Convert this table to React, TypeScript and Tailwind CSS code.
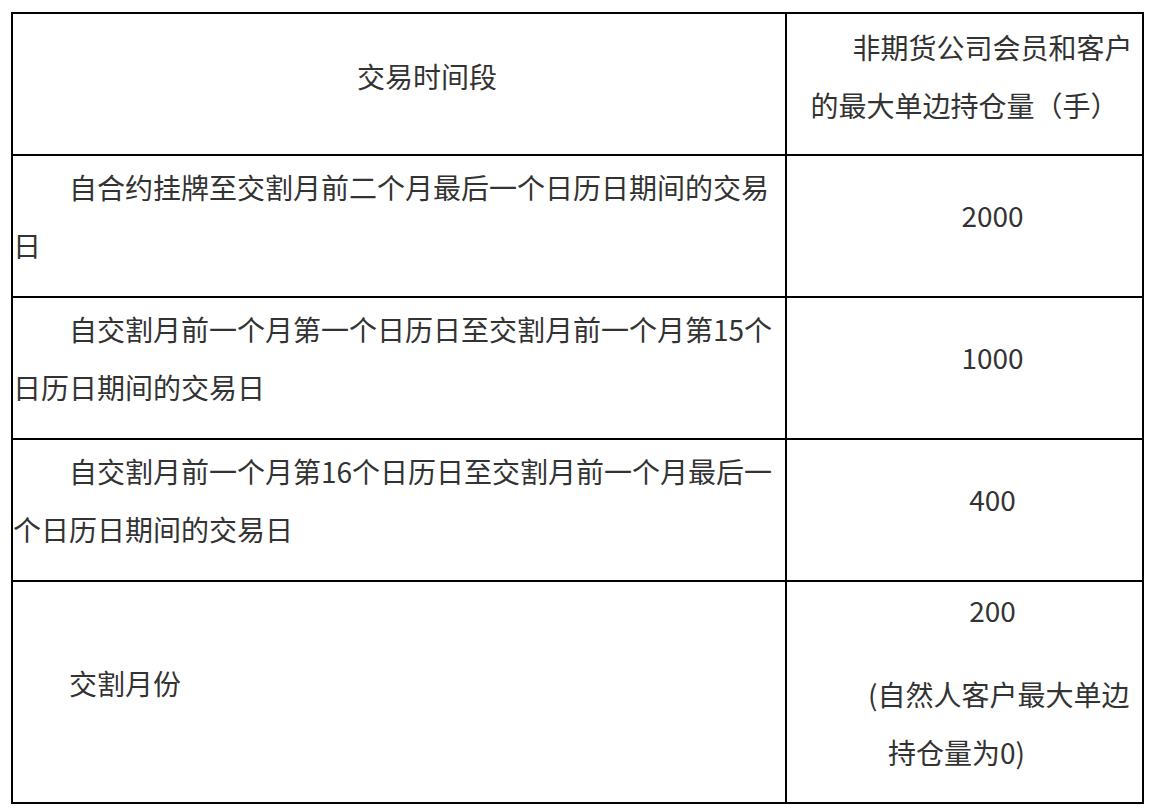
import React from "react"

type Row = {
  period: string
  limit: string
}

const rows: Row[] = [
  { period: "自合约挂牌至交割月前二个月最后一个日历日期间的交易日", limit: "2000" },
  { period: "自交割月前一个月第一个日历日至交割月前一个月第15个日历日期间的交易日", limit: "1000" },
  { period: "自交割月前一个月第16个日历日至交割月前一个月最后一个日历日期间的交易日", limit: "400" },
]

const font = { fontFamily: '"Noto Sans CJK SC", "Noto Sans", sans-serif' }

export default function App() {
  return (
    <div className="min-h-screen bg-white pt-[12px] pl-[11px]" style={font}>
      <div className="w-[1133px] border-2 border-black text-[28px] leading-[58px] text-[#333333]">
        {/* header */}
        <div className="flex h-[142px] border-b-2 border-black">
          <div className="flex w-[774px] items-center justify-center border-r-2 border-black px-[3px] pb-[17px]">
            <p className="indent-[56px] text-center">交易时间段</p>
          </div>
          <div className="flex flex-1 items-center px-[3px] pb-[16px]">
            <p className="indent-[56px] text-center">非期货公司会员和客户的最大单边持仓量（手）</p>
          </div>
        </div>

        {rows.map((row) => (
          <div key={row.limit} className="flex h-[142px] border-b-2 border-black">
            <div className="flex w-[774px] items-center border-r-2 border-black pr-[3px] pb-[21px]">
              <p className="indent-[56px]">{row.period}</p>
            </div>
            <div className="flex flex-1 items-center justify-center px-[3px] pb-[22px]">
              <p className="indent-[56px] text-center">{row.limit}</p>
            </div>
          </div>
        ))}

        {/* delivery month */}
        <div className="flex h-[220px]">
          <div className="flex w-[774px] items-center border-r-2 border-black pr-[3px] pb-[19px]">
            <p className="indent-[56px]">交割月份</p>
          </div>
          <div className="flex flex-1 flex-col items-center justify-center gap-[26px] px-[3px] pb-[22px]">
            <p className="w-full indent-[56px] text-center">200</p>
            <div className="w-full">
              <p className="pl-[78px]">(自然人客户最大单边</p>
              <p className="pl-[98px]">持仓量为0)</p>
            </div>
          </div>
        </div>
      </div>
    </div>
  )
}
